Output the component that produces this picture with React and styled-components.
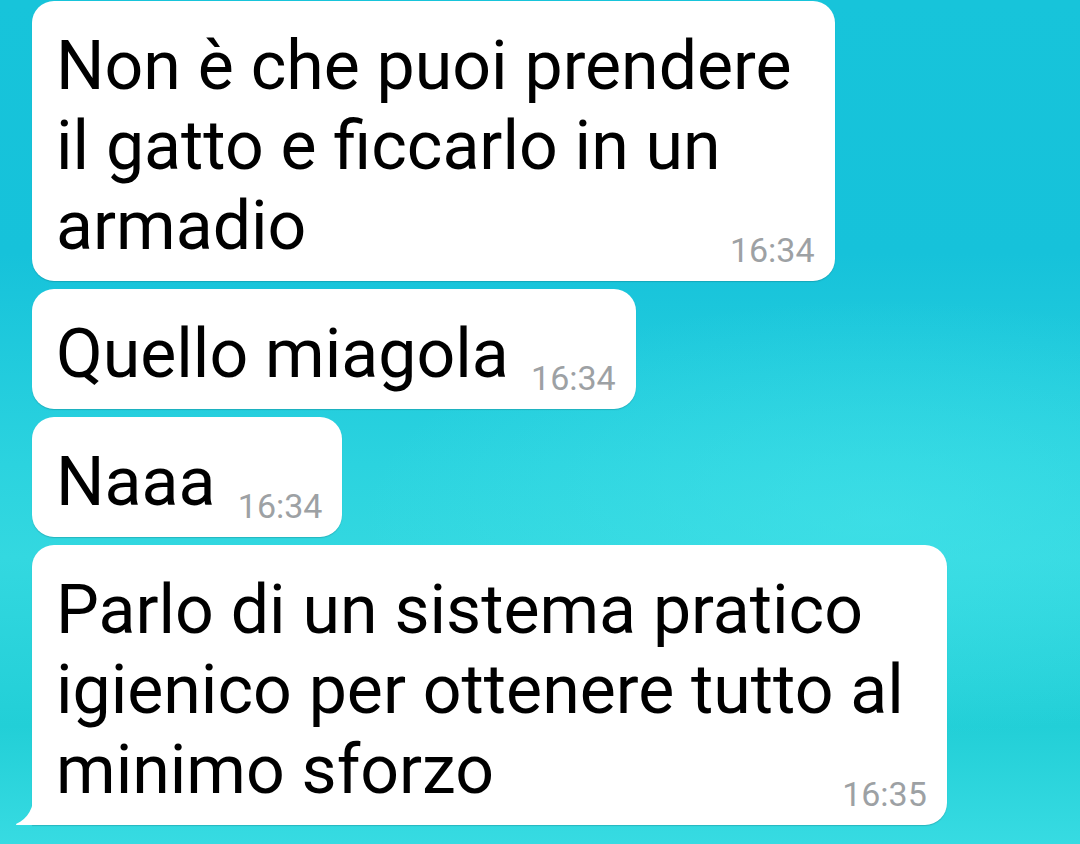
import React from "react";
import styled, { createGlobalStyle } from "styled-components";

const GlobalStyle = createGlobalStyle`
  html, body {
    margin: 0;
    height: 100%;
  }
  body {
    font-family: Roboto, "Noto Sans", "Liberation Sans", sans-serif;
    overflow: hidden;
  }
`;

const Screen = styled.div`
  width: 1080px;
  height: 844px;
  box-sizing: border-box;
  padding: 1px 0 0 32px;
  display: flex;
  flex-direction: column;
  align-items: flex-start;
  gap: 8px;
  background:
    radial-gradient(ellipse 520px 220px at 880px 520px, rgba(70, 228, 234, 0.55), rgba(70, 228, 234, 0) 100%),
    linear-gradient(180deg, #17c4da 0%, #16c2da 30%, #2bd3df 55%, #33d8e0 66%, #22cfd7 86%, #37dbe2 100%);
`;

const Bubble = styled.div`
  position: relative;
  display: grid;
  box-sizing: border-box;
  padding: 25px 43px 15px 24px;
  background: #ffffff;
  border-radius: 22px;
  border-bottom-left-radius: ${(p) => (p.$tail ? "0" : "22px")};
  box-shadow: 0 1px 1px rgba(0, 80, 90, 0.25);
  color: #000000;
`;

const Text = styled.div`
  grid-area: 1 / 1;
  font-size: 68px;
  line-height: 80px;
  white-space: nowrap;
`;

const Line = styled.div``;

const Spacer = styled.span`
  display: inline-block;
  width: 84px;
`;

const Time = styled.span`
  grid-area: 1 / 1;
  justify-self: end;
  align-self: end;
  margin: 0 -23px -4px 0;
  font-size: 34px;
  line-height: 40px;
  color: #9da1a4;
`;

const Tail = styled.svg`
  position: absolute;
  left: -16px;
  bottom: 0;
  width: 18px;
  height: 32px;
`;

const messages = [
  { lines: ["Non è che puoi prendere", "il gatto e ficcarlo in un", "armadio"], time: "16:34" },
  { lines: ["Quello miagola"], time: "16:34" },
  { lines: ["Naaa"], time: "16:34" },
  {
    lines: ["Parlo di un sistema pratico", "igienico per ottenere tutto al", "minimo sforzo"],
    time: "16:35",
    tail: true,
  },
];

function Message({ lines, time, tail }) {
  return (
    <Bubble $tail={tail}>
      <Text>
        {lines.map((l, i) => (
          <Line key={i}>
            {l}
            {i === lines.length - 1 && <Spacer />}
          </Line>
        ))}
      </Text>
      <Time>{time}</Time>
      {tail && (
        <Tail viewBox="0 0 18 32">
          <path d="M18 0 C18 14 12 26 0 31 C0 31.6 0.4 32 1 32 L18 32 Z" fill="#ffffff" />
        </Tail>
      )}
    </Bubble>
  );
}

export default function App() {
  return (
    <>
      <GlobalStyle />
      <Screen>
        {messages.map((m, i) => (
          <Message key={i} {...m} />
        ))}
      </Screen>
    </>
  );
}
